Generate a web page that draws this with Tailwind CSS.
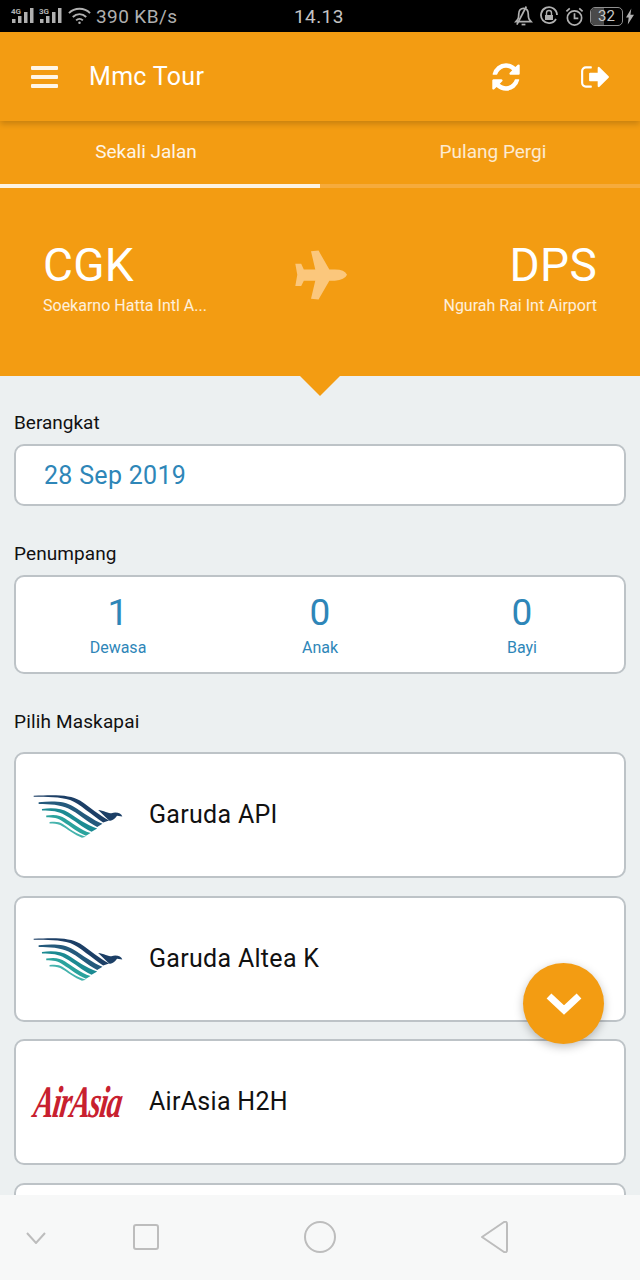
<!DOCTYPE html>
<html lang="en">
  <head>
    <meta charset="UTF-8" />
    <meta name="viewport" content="width=device-width, initial-scale=1.0" />
    <title>Mmc Tour</title>
    <script src="https://cdn.jsdelivr.net/npm/@tailwindcss/browser@4"></script>
  </head>
  <body class="bg-[#ecf0f1] font-['Roboto',sans-serif]">
    <div class="relative w-[640px] h-[1280px] overflow-hidden bg-[#ecf0f1]">
      <!-- status bar -->
      <div class="h-8 bg-black text-[#b0b0b0] flex items-center pl-[10px] pr-[6px] relative">
        <div class="flex items-center gap-[5px]">
          <svg width="24" height="18" viewBox="0 0 24 18" fill="currentColor">
            <text x="1" y="7" font-size="8" font-weight="700" font-family="Roboto">4G</text>
            <rect x="2" y="12" width="3.500" height="4" /><rect x="8" y="9" width="3.500" height="7" /><rect x="14" y="5" width="3.500" height="11" /><rect x="20" y="1" width="3.500" height="15" />
          </svg>
          <svg width="24" height="18" viewBox="0 0 24 18" fill="currentColor">
            <text x="0" y="7" font-size="8" font-weight="700" font-family="Roboto">3G</text>
            <rect x="1" y="12" width="3.500" height="4" /><rect x="7" y="9" width="3.500" height="7" /><rect x="13" y="5" width="3.500" height="11" /><rect x="19" y="1" width="3.500" height="15" />
          </svg>
          <svg width="23" height="18" viewBox="0 0 24 18" fill="none" stroke="currentColor" stroke-width="2">
            <path d="M1 6c6-6 16-6 22 0" /><path d="M5 10c4-4 10-4 14 0" /><path d="M8.500 13.500c2-2 5-2 7 0" /><circle cx="12" cy="16" r="1.300" fill="currentColor" stroke="none" />
          </svg>
          <span class="text-[19px] tracking-[0.4px] leading-none">390 KB/s</span>
        </div>
        <span class="absolute left-[294px] top-[7px] text-[19px] leading-none tracking-[0.4px] text-[#c4c4c4]">14.13</span>
        <div class="ml-auto flex items-center gap-[6px]">
          <svg width="19" height="22" viewBox="0 0 20 22" fill="none" stroke="currentColor" stroke-width="1.800">
            <path d="M2 17c2-2 3-3 3-8 0-4 2-6 5-6s5 2 5 6c0 5 1 6 3 8z" /><path d="M8 20h4" /><path d="M3 20 13 1" />
          </svg>
          <svg width="20" height="20" viewBox="0 0 20 20" fill="none" stroke="currentColor" stroke-width="1.800">
            <path d="M17 13a8 8 0 1 1 1-4" /><rect x="6" y="9" width="8" height="5" fill="currentColor" stroke="none" /><path d="M7.500 9V7a2.500 2.500 0 0 1 5 0v2" stroke-width="1.400" />
          </svg>
          <svg width="19" height="21" viewBox="0 0 20 21" fill="none" stroke="currentColor" stroke-width="1.800">
            <circle cx="10" cy="12" r="7.500" /><path d="M10 7v5.500h4" /><path d="M1.500 5 5 2M18.500 5 15 2" />
          </svg>
          <div class="w-[33px] h-[19px] rounded-[5px] border border-[#8f8f8f] overflow-hidden relative flex items-center justify-center">
            <div class="absolute left-0 top-0 bottom-0 w-[13px] bg-[#4a4a4a]"></div>
            <span class="relative text-[15px] leading-none text-[#c8c8c8]">32</span>
          </div>
          <svg class="-ml-[3px]" width="8" height="17" viewBox="0 0 9 18" fill="currentColor"><path d="M6 0 0 10h3l-1 8 7-11H5z" /></svg>
        </div>
      </div>

      <!-- header -->
      <div class="relative z-10 h-[89px] bg-[#f39c12] shadow-[0_3px_6px_rgba(0,0,0,0.18)] flex items-center text-white">
        <div class="ml-[31px] w-[27px] flex flex-col gap-[5px]">
          <div class="h-1 bg-[#fff6e6] rounded-[1px]"></div>
          <div class="h-1 bg-[#fff6e6] rounded-[1px]"></div>
          <div class="h-1 bg-[#fff6e6] rounded-[1px]"></div>
        </div>
        <span class="ml-[31px] text-[25px] leading-none tracking-[0.3px]">Mmc Tour</span>
        <svg class="ml-auto" width="28" height="32" viewBox="0 0 1536 1792" fill="#fff">
          <path d="M1511 1056q0 5-1 7-64 268-268 434.500t-478 166.500q-146 0-282.500-55t-243.500-157l-129 129q-19 19-45 19t-45-19-19-45v-448q0-26 19-45t45-19h448q26 0 45 19t19 45-19 45l-137 137q71 66 161 102t187 36q134 0 250-65t186-179q11-17 53-117 8-23 30-23h192q13 0 22.500 9.500t9.500 22.500zm25-800v448q0 26-19 45t-45 19h-448q-26 0-45-19t-19-45 19-45l138-138q-148-137-349-137-134 0-250 65t-186 179q-11 17-53 117-8 23-30 23h-199q-13 0-22.500-9.500t-9.500-22.500v-7q65-268 270-434.500t480-166.500q146 0 284 55.500t245 156.500l130-129q19-19 45-19t45 19 19 45z" />
        </svg>
        <svg class="ml-[61px] mr-[31px]" width="28" height="30" viewBox="0 0 1664 1792" fill="#fff">
          <path d="M640 1440q0 4 1 20t.500 26.500-3 23.500-10 19.500-20.500 6.500h-320q-119 0-203.500-84.500t-84.500-203.500v-704q0-119 84.500-203.500t203.500-84.500h320q13 0 22.500 9.500t9.500 22.500q0 4 1 20t.500 26.500-3 23.500-10 19.500-20.500 6.500h-320q-66 0-113 47t-47 113v704q0 66 47 113t113 47h312l11.500 1 11.500 3 8 5.500 7 9 2 13.500zm1024-544q0 26-19 45l-544 544q-19 19-45 19t-45-19-19-45v-288h-448q-26 0-45-19t-19-45v-384q0-26 19-45t45-19h448v-288q0-26 19-45t45-19 45 19l544 544q19 19 19 45z" />
        </svg>
      </div>

      <!-- tabs -->
      <div class="h-[67px] bg-[#f39c12] flex text-[19px] leading-none">
        <div class="w-1/2 flex items-center justify-center pb-[2px] text-white/90 border-b-[4px] border-[#fdf3e2] pr-[28px]">Sekali Jalan</div>
        <div class="w-1/2 flex items-center justify-center pb-[2px] text-white/80 border-b-[4px] border-[#f6ab3c] pl-[26px]">Pulang Pergi</div>
      </div>

      <!-- route -->
      <div class="relative h-[188px] bg-[#f39c12] text-white flex items-start justify-between px-[43px] pt-[52px]">
        <div>
          <div class="text-[46px] leading-[50px] tracking-[0.3px]">CGK</div>
          <div class="mt-[6px] text-[16px] leading-5 text-white/85">Soekarno Hatta Intl A...</div>
        </div>
        <svg class="absolute left-[294px] top-[61px]" width="54" height="52" viewBox="70 55 165 155" fill="#fbc77c">
          <path d="M232 132Q225 116 195 116H178L145 58 122 60 135 116H100L92 98H74L80 132 74 166H92L100 150H135L122 205 145 207 178 150H195Q225 148 232 132Z" />
        </svg>
        <div class="text-right">
          <div class="text-[46px] leading-[50px] tracking-[0.3px]">DPS</div>
          <div class="mt-[6px] text-[16px] leading-5 text-white/85">Ngurah Rai Int Airport</div>
        </div>
        <svg class="absolute left-[300px] top-full" width="40" height="20" viewBox="0 0 40 20" fill="#f39c12"><path d="M0 0h40L20 20z" /></svg>
      </div>

      <!-- form -->
      <div class="px-[14px] pt-[35px] text-[19px] text-[#111]">
        <div class="leading-6">Berangkat</div>
        <div class="mt-[9px] h-[62px] bg-white border-2 border-[#bdc3c7] rounded-[10px] flex items-center pl-[28px] pt-[1px] text-[25px] tracking-[0.3px] text-[#2e86b8]">28 Sep 2019</div>

        <div class="mt-9 leading-6 tracking-[0.1px]">Penumpang</div>
        <div class="mt-[9px] h-[99px] bg-white border-2 border-[#bdc3c7] rounded-[10px] grid grid-cols-3 text-center text-[#2e86b8] pt-[16px] px-[1px]">
          <div><div class="text-[37px] leading-[40px]">1</div><div class="mt-[5px] text-[16px] leading-5">Dewasa</div></div>
          <div><div class="text-[37px] leading-[40px]">0</div><div class="mt-[5px] text-[16px] leading-5">Anak</div></div>
          <div><div class="text-[37px] leading-[40px]">0</div><div class="mt-[5px] text-[16px] leading-5">Bayi</div></div>
        </div>

        <div class="mt-9 leading-6 tracking-[0.15px]">Pilih Maskapai</div>
        <div class="mt-[18px] flex flex-col gap-[17.500px]">
          <div class="h-[126px] bg-white border-2 border-[#bdc3c7] rounded-[10px] flex items-center pl-[17px] text-[25px] tracking-[0.3px] text-[#111]">
            <svg class="mt-[2px]" width="90" height="43" viewBox="39 45 270 130">
              <path fill="#1c3f66" d="M40 47C110 44 150 44 180 62 210 82 240 108 268 122L250 128C215 105 180 72 150 60 120 50 80 50 40 50Z" />
              <path fill="#245a7c" d="M55 67C100 63 135 64 160 80 190 98 220 122 248 132L232 142C200 125 175 100 145 86 120 74 90 72 55 72Z" />
              <path fill="#1b8a92" d="M65 87C100 83 125 86 145 98 170 114 200 136 232 146L215 156C185 142 165 122 135 106 115 94 95 92 65 92Z" />
              <path fill="#2aa39d" d="M78 107C105 103 120 106 135 116 155 128 180 150 212 160L198 168C172 158 152 140 128 125 112 114 100 112 78 112Z" />
              <path fill="#45b3ad" d="M88 127C105 124 118 126 128 133 145 145 170 165 198 171L186 174C165 168 140 146 120 136 110 131 100 131 88 131Z" />
              <path fill="#1c3f66" d="M235 90C250 92 268 100 275 100 290 95 305 100 308 110L292 108C285 118 275 125 268 122 258 112 245 100 235 90Z" />
            </svg>
            <span class="ml-[26px]">Garuda API</span>
          </div>
          <div class="h-[126px] bg-white border-2 border-[#bdc3c7] rounded-[10px] flex items-center pl-[17px] text-[25px] tracking-[0.3px] text-[#111]">
            <svg class="mt-[2px]" width="90" height="43" viewBox="39 45 270 130">
              <path fill="#1c3f66" d="M40 47C110 44 150 44 180 62 210 82 240 108 268 122L250 128C215 105 180 72 150 60 120 50 80 50 40 50Z" />
              <path fill="#245a7c" d="M55 67C100 63 135 64 160 80 190 98 220 122 248 132L232 142C200 125 175 100 145 86 120 74 90 72 55 72Z" />
              <path fill="#1b8a92" d="M65 87C100 83 125 86 145 98 170 114 200 136 232 146L215 156C185 142 165 122 135 106 115 94 95 92 65 92Z" />
              <path fill="#2aa39d" d="M78 107C105 103 120 106 135 116 155 128 180 150 212 160L198 168C172 158 152 140 128 125 112 114 100 112 78 112Z" />
              <path fill="#45b3ad" d="M88 127C105 124 118 126 128 133 145 145 170 165 198 171L186 174C165 168 140 146 120 136 110 131 100 131 88 131Z" />
              <path fill="#1c3f66" d="M235 90C250 92 268 100 275 100 290 95 305 100 308 110L292 108C285 118 275 125 268 122 258 112 245 100 235 90Z" />
            </svg>
            <span class="ml-[26px]">Garuda Altea K</span>
          </div>
          <div class="h-[126px] bg-white border-2 border-[#bdc3c7] rounded-[10px] flex items-center pl-[17px] text-[25px] tracking-[0.3px] text-[#111]">
            <div class="w-[90px] whitespace-nowrap text-center font-['Liberation_Serif',serif] italic font-bold text-[30px] leading-none tracking-[-1.200px] text-[#c8202f] -skew-x-12 scale-y-150">AirAsia</div>
            <span class="ml-[26px]">AirAsia H2H</span>
          </div>
          <div class="h-[126px] bg-white border-2 border-[#bdc3c7] rounded-[10px]"></div>
        </div>
      </div>

      <!-- scroll button -->
      <div class="absolute left-[523px] top-[963px] w-[81px] h-[81px] rounded-full bg-[#f39c12] shadow-[0_3px_10px_rgba(0,0,0,0.25)] flex items-center justify-center">
        <svg width="36" height="24" viewBox="0 0 36 24" fill="none" stroke="#fff" stroke-width="7"><path d="M3 4l15 14L33 4" /></svg>
      </div>

      <!-- nav bar -->
      <div class="absolute left-0 right-0 bottom-0 h-[85px] bg-[#f7f8f8] flex items-center text-[#bdbdbd]">
        <svg class="absolute left-[26px] top-[37px]" width="20" height="12" viewBox="0 0 20 12" fill="none" stroke="currentColor" stroke-width="2"><path d="M1 1l9 10 9-10" /></svg>
        <div class="absolute left-[133px] top-[29px] w-[26px] h-[26px] rounded-[3px] border-2 border-[#bdbdbd]"></div>
        <div class="absolute left-[304px] top-[26px] w-[32px] h-[32px] rounded-full border-2 border-[#bdbdbd]"></div>
        <svg class="absolute left-[480px] top-[26px]" width="28" height="32" viewBox="0 0 28 32" fill="none" stroke="currentColor" stroke-width="2" stroke-linejoin="round"><path d="M2 16 24 1q3-1 3 2v26q0 3-3 2z" /></svg>
      </div>
    </div>
  </body>
</html>
